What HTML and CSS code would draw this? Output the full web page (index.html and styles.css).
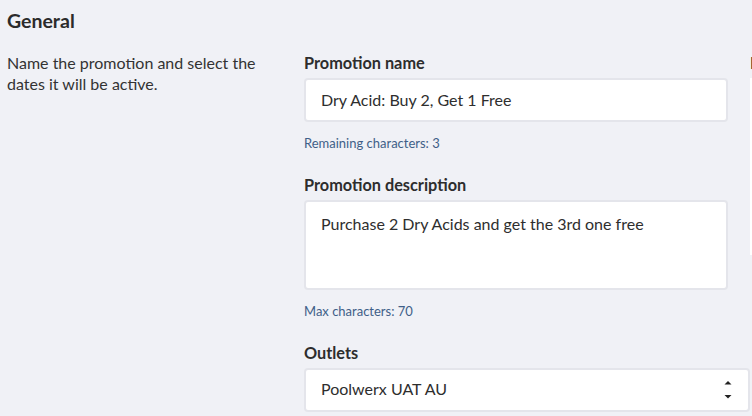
FILE: index.html
```html
<!DOCTYPE html>
<html lang="en">
<head>
<meta charset="utf-8">
<title>General</title>
<link rel="stylesheet" href="styles.css">
</head>
<body>
<section class="section">
  <h2 class="section-title">General</h2>
  <div class="section-row">
    <div class="section-intro">
      <p class="intro-text">Name the promotion and select the dates it will be active.</p>
    </div>
    <div class="form">
      <div class="form-main">
        <div class="field field-name">
          <label class="label">Promotion name</label>
          <div class="control control-input">Dry Acid: Buy 2, Get 1 Free</div>
          <p class="help">Remaining characters: 3</p>
        </div>
        <div class="field field-desc">
          <label class="label">Promotion description</label>
          <div class="control control-textarea">Purchase 2 Dry Acids and get the 3rd one free</div>
          <p class="help">Max characters: 70</p>
        </div>
        <div class="field field-outlets">
          <label class="label">Outlets</label>
          <div class="control control-select">
            <span class="select-value">Poolwerx UAT AU</span>
            <svg class="select-arrows" width="8" height="20" viewBox="0 0 8 20" aria-hidden="true">
              <polygon points="0.5,4.5 4,1 7.5,4.5" fill="#222"/>
              <polygon points="0.5,15 7.5,15 4,18.5" fill="#222"/>
            </svg>
          </div>
        </div>
      </div>
      <div class="form-side">
        <label class="label">Promotion dates</label>
        <div class="date-panel"></div>
      </div>
    </div>
  </div>
</section>
</body>
</html>
```

FILE: styles.css
```css
html, body {
  margin: 0;
  padding: 0;
  overflow: hidden;
  background: #f0f1f6;
}

body {
  font-family: Lato, "Open Sans", "Liberation Sans", sans-serif;
  color: #333333;
  width: 752px;
  height: 416px;
}

.section {
  padding: 0 0 0 7px;
}

.section-title {
  margin: 0;
  padding-top: 9px;
  font-size: 19.5px;
  line-height: 24px;
  font-weight: 700;
  color: #2b2b2b;
  height: 43px;
}

.section-row {
  display: flex;
  align-items: flex-start;
  padding-top: 0.5px;
}

.section-intro {
  width: 297px;
  flex: none;
  padding-right: 40px;
  box-sizing: border-box;
}

.intro-text {
  margin: -1px 0 0;
  font-size: 16px;
  line-height: 21px;
  color: #333333;
}

.form {
  display: flex;
  flex: none;
  gap: 0;
}

.form-main {
  width: 446px;
  flex: none;
}

.field {
  margin-bottom: 24px;
}

.field-name {
  margin-bottom: 24.5px;
}

.label {
  display: block;
  font-size: 16.3px;
  line-height: 20px;
  font-weight: 700;
  color: #2d2d2d;
  margin-bottom: 5px;
}

.control {
  box-sizing: border-box;
  background: #ffffff;
  border: 2px solid #e4e5eb;
  border-radius: 4px;
  font-size: 16px;
  line-height: 20px;
  color: #2e2e2e;
  padding: 0 15px;
}

.control-input {
  width: 424px;
  height: 44px;
  display: flex;
  align-items: center;
}

.control-textarea {
  width: 424px;
  height: 90px;
  padding-top: 12px;
}

.control-select {
  width: 446px;
  height: 44px;
  display: flex;
  align-items: center;
  justify-content: space-between;
  padding-right: 16px;
}

.select-value {
  position: relative;
  top: -1px;
}

.select-arrows {
  display: block;
}

.help {
  margin: 13px 0 0;
  font-size: 13px;
  line-height: 16px;
  color: #3f5f88;
}

.form-side {
  width: 300px;
  flex: none;
}

.date-panel {
  background: #ffffff;
  height: 177px;
}
```
